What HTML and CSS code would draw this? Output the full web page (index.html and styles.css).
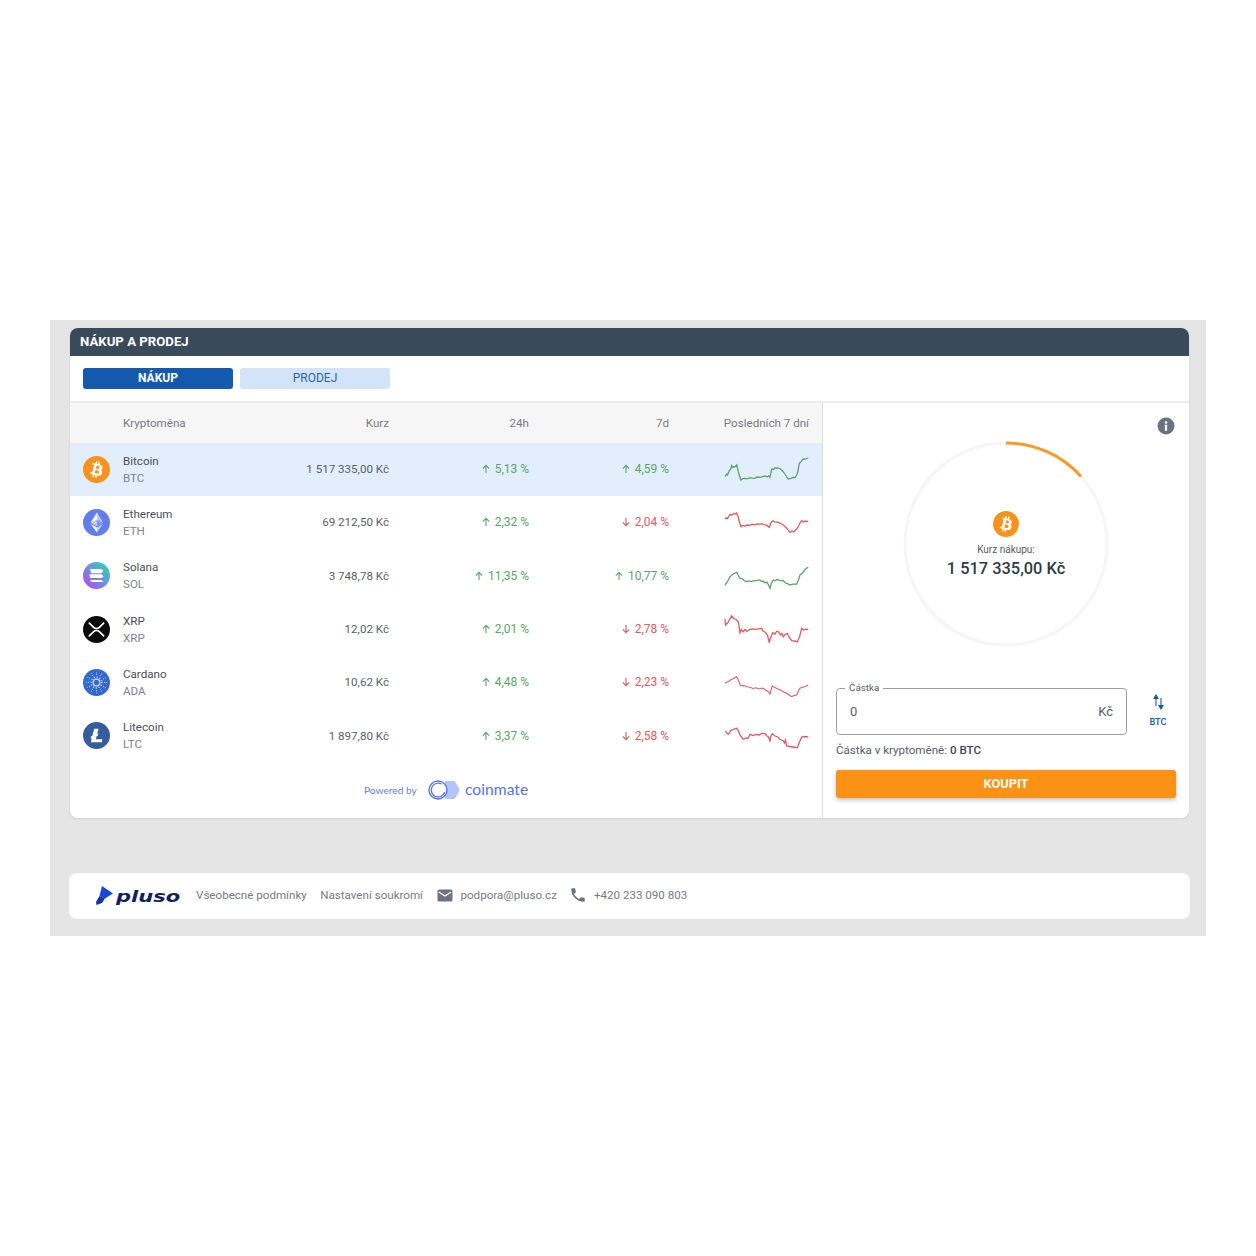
FILE: index.html
```html
<!DOCTYPE html>
<html lang="cs">
<head>
  <meta charset="UTF-8">
  <meta name="viewport" content="width=device-width, initial-scale=1.0">
  <title>Pluso - Nákup a prodej</title>
  <link rel="stylesheet" href="styles.css">
</head>
<body>
  <svg class="defs" width="0" height="0" aria-hidden="true">
    <defs>
      <symbol id="arrow-up" viewBox="0 0 10 10"><path d="M5 9V1.5M1.8 4.6 5 1.4l3.2 3.2" fill="none" stroke="currentColor" stroke-width="1.1"/></symbol>
      <symbol id="arrow-down" viewBox="0 0 10 10"><path d="M5 1v7.5M1.8 5.4 5 8.6l3.2-3.2" fill="none" stroke="currentColor" stroke-width="1.1"/></symbol>
      <symbol id="btc" viewBox="0 0 32 32">
        <circle cx="16" cy="16" r="16" fill="#f7931a"/>
        <path fill="#fff" d="M23.189 14.02c.314-2.096-1.283-3.223-3.465-3.975l.708-2.84-1.728-.43-.69 2.765c-.454-.114-.92-.22-1.385-.326l.695-2.783L15.596 6l-.708 2.839c-.376-.086-.746-.17-1.104-.26l.002-.009-2.384-.595-.46 1.846s1.283.294 1.256.312c.7.175.826.638.805 1.006l-.806 3.235c.048.012.11.03.18.057l-.183-.045-1.13 4.532c-.086.212-.303.531-.793.41.018.025-1.256-.313-1.256-.313l-.858 1.978 2.25.561c.418.105.828.215 1.231.318l-.715 2.872 1.727.43.708-2.84c.472.127.93.245 1.378.357l-.706 2.828 1.728.43.715-2.866c2.948.558 5.164.333 6.097-2.333.752-2.146-.037-3.385-1.588-4.192 1.13-.26 1.98-1.003 2.207-2.538zm-3.95 5.538c-.533 2.147-4.148.986-5.32.695l.95-3.805c1.172.293 4.929.872 4.37 3.11zm.535-5.569c-.487 1.953-3.495.96-4.47.717l.86-3.45c.975.243 4.118.696 3.61 2.733z"/>
      </symbol>
      <linearGradient id="sol-grad" x1="0" y1="1" x2="1" y2="0">
        <stop offset="0" stop-color="#c03dea"/>
        <stop offset="0.5" stop-color="#6f8fe0"/>
        <stop offset="1" stop-color="#1fe6a0"/>
      </linearGradient>
    </defs>
  </svg>

  <div class="band">
    <div class="card">
      <h1 class="card-title">NÁKUP A PRODEJ</h1>
      <div class="tabs">
        <button class="tab tab-active">NÁKUP</button>
        <button class="tab">PRODEJ</button>
      </div>

      <div class="card-body">
        <!-- Tabulka kurzů -->
        <div class="rates">
          <div class="row row-head">
            <span></span>
            <span>Kryptoměna</span>
            <span class="num">Kurz</span>
            <span class="num">24h</span>
            <span class="num">7d</span>
            <span class="num">Posledních 7 dní</span>
          </div>

          <div class="row row-selected">
            <svg class="coin"><use href="#btc"/></svg>
            <div class="coin-name">Bitcoin<small>BTC</small></div>
            <span class="num">1 517 335,00 Kč</span>
            <span class="num pct up"><svg class="arrow"><use href="#arrow-up"/></svg>5,13 %</span>
            <span class="num pct up"><svg class="arrow"><use href="#arrow-up"/></svg>4,59 %</span>
            <svg class="spark up" viewBox="0 0 85 30"><polyline points="1,22.7 2.7,20 3.5,21 5.3,16.7 6.5,15.5 7.7,11.7 8.5,13.5 9.3,12.7 11,13 12.7,11 14.3,17.7 15.5,22 17,26 19,24.6 21,24.4 23.5,24.8 26,23.7 28.5,24.2 31,24.3 33,23 36,23.4 38.5,22.6 41,22 43,22.9 44.5,21.8 46,23.3 47.7,15 49.5,15.6 51,14 54.3,14 56.5,15 59.3,17.7 61.5,21 64.3,25 67,24.4 69.3,23.3 71,23.6 72.7,21 74,17 75.3,9.3 76.8,8 78.7,5.3 81,5 84.3,4"/></svg>
          </div>

          <div class="row">
            <svg class="coin" viewBox="0 0 32 32">
              <circle cx="16" cy="16" r="16" fill="#627eea"/>
              <g fill="#fff"><path fill-opacity=".6" d="M16.498 4v8.87l7.497 3.35z"/><path d="M16.498 4L9 16.22l7.498-3.35z"/><path fill-opacity=".6" d="M16.498 21.968v6.027L24 17.616z"/><path d="M16.498 27.995v-6.028L9 17.616z"/><path fill-opacity=".2" d="M16.498 20.573l7.497-4.353-7.497-3.348z"/><path fill-opacity=".6" d="M9 16.22l7.498 4.353v-7.701z"/></g>
            </svg>
            <div class="coin-name">Ethereum<small>ETH</small></div>
            <span class="num">69 212,50 Kč</span>
            <span class="num pct up"><svg class="arrow"><use href="#arrow-up"/></svg>2,32 %</span>
            <span class="num pct down"><svg class="arrow"><use href="#arrow-down"/></svg>2,04 %</span>
            <svg class="spark down" viewBox="0 0 85 30"><polyline points="1,12 2.5,10.8 3.5,11.5 6,7.5 8,8 9.5,6.5 11,7 12.7,6 14.3,10.3 15.5,15 17,19.7 19,18.5 21,19.2 23,18 26,18.3 28,17.2 31,17.8 33,17 36,17.2 38,16.6 41,18 43,18.4 45.3,20.3 46.8,16 48.7,13.7 51,14.8 54.3,15.3 57,16.5 59.3,18 62,20.5 64,22.8 66,25.3 68,23.8 70,25 72.7,22 74.5,19 76,16 77.7,13.7 79.5,15 81,14 84.3,14.7"/></svg>
          </div>

          <div class="row">
            <svg class="coin" viewBox="0 0 32 32">
              <circle cx="16" cy="16" r="16" fill="url(#sol-grad)"/>
              <path fill="#fff" d="M8.500 21.200h12.800c.4 0 .7.100 1 .4l1.900 2.200H10.800c-.4 0-.7-.1-1-.4zM8.500 8.200h12.600c.4 0 .7.100 1 .4l2 2.200-2 2.200c-.3.300-.6.400-1 .4H9.500zM7.500 14.600h14.300l2.700 2.300-2.300 2.200H9.500c-.4 0-.7-.1-1-.4z"/>
            </svg>
            <div class="coin-name">Solana<small>SOL</small></div>
            <span class="num">3 748,78 Kč</span>
            <span class="num pct up"><svg class="arrow"><use href="#arrow-up"/></svg>11,35 %</span>
            <span class="num pct up"><svg class="arrow"><use href="#arrow-up"/></svg>10,77 %</span>
            <svg class="spark up" viewBox="0 0 85 30"><polyline points="1,24 2.5,22 4,19.5 6,15.7 8,14 10,12.5 12.7,11.3 14,14 16,17.3 18,17.5 20,19.5 22.7,20.7 25,20 27,20.6 30,19.6 32.7,19.7 35,19 37.5,20.4 39,20 41,21.7 43,21.3 44.5,24 46,27.3 47.5,22 49.3,19 51,19.8 53,18.4 56,19.6 59.3,19.7 61.5,22 63.5,22.6 66,24 69,23.2 72.7,23 74.5,19 76,14 78,12.5 80,10 82,7.5 84.3,6.3"/></svg>
          </div>

          <div class="row">
            <svg class="coin" viewBox="0 0 32 32">
              <circle cx="16" cy="16" r="16" fill="#0b0b0b"/>
              <path d="M7.500 8.500 12.600 13.400c1.900 1.900 4.900 1.900 6.800 0L24.500 8.500M7.500 23.500 12.600 18.600c1.900-1.900 4.900-1.900 6.800 0L24.500 23.500" fill="none" stroke="#fff" stroke-width="2" stroke-linecap="round"/>
            </svg>
            <div class="coin-name">XRP<small>XRP</small></div>
            <span class="num">12,02 Kč</span>
            <span class="num pct up"><svg class="arrow"><use href="#arrow-up"/></svg>2,01 %</span>
            <span class="num pct down"><svg class="arrow"><use href="#arrow-down"/></svg>2,78 %</span>
            <svg class="spark down" viewBox="0 0 85 30"><polyline points="1,5 1.500,11 4,8.500 5.500,5.500 7.700,2 9.500,4.500 12,5.500 14.300,7.700 15.200,13 16,18.700 17.500,15.500 19,17.800 21,15.500 23,17.500 26,15.300 29,14.800 32,15.400 35,14.800 37.700,14.300 39,17 41.500,18.500 43.500,21 45.300,28.700 46.500,24 48.700,18.700 51,20 52.500,17.500 54.300,17.700 56.500,21 58,19.500 59.300,22.700 61,20.500 63.300,19.300 65,23 67.700,26.700 70,27 73.300,27.700 75.500,23 77.700,14.300 79.500,16 81.500,15.200 84.300,15.300"/></svg>
          </div>

          <div class="row">
            <svg class="coin" viewBox="0 0 32 32">
              <circle cx="16" cy="16" r="16" fill="#3468d1"/>
              <circle cx="16" cy="16" r="4" fill="none" stroke="#fff" stroke-width="1.400" stroke-opacity=".8"/>
              <g fill="none" stroke="#fff" stroke-linecap="round">
                <circle cx="16" cy="16" r="6.500" stroke-width="1.500" stroke-dasharray="0 3.403"/>
                <circle cx="16" cy="16" r="9.500" stroke-width="1.100" stroke-dasharray="0 4.974"/>
                <circle cx="16" cy="16" r="12" stroke-width="0.800" stroke-dasharray="0 6.283"/>
              </g>
            </svg>
            <div class="coin-name">Cardano<small>ADA</small></div>
            <span class="num">10,62 Kč</span>
            <span class="num pct up"><svg class="arrow"><use href="#arrow-up"/></svg>4,48 %</span>
            <span class="num pct down"><svg class="arrow"><use href="#arrow-down"/></svg>2,23 %</span>
            <svg class="spark down thin" viewBox="0 0 85 30"><polyline points="1,16.300 3,15 5,14.500 7,12.500 9,12 11,10.500 12.700,9.700 14.500,13.500 16.300,18.300 19,18.600 22,19 24,20 26,20.300 29,21.500 32,20.800 35,22 37,21.200 39.300,21.300 42,23.200 44,24.500 46,27 47,23 48.300,19 51,20.500 54,22 56.500,23 59.300,24.700 62,26 64.500,27.500 67.700,29.700 70,28.500 72.700,28 74.500,24 76,21.300 79,20 81.500,19.500 84.300,18"/></svg>
          </div>

          <div class="row">
            <svg class="coin" viewBox="0 0 32 32">
              <circle cx="16" cy="16" r="16" fill="#345d9d"/>
              <path fill="#fff" d="M10.427 19.214L9 19.768l.688-2.759 1.444-.58L13.213 8h5.129l-1.519 6.196 1.41-.571-.68 2.75-1.427.571-.848 3.483H23L22.127 24H9.252z"/>
            </svg>
            <div class="coin-name">Litecoin<small>LTC</small></div>
            <span class="num">1 897,80 Kč</span>
            <span class="num pct up"><svg class="arrow"><use href="#arrow-up"/></svg>3,37 %</span>
            <span class="num pct down"><svg class="arrow"><use href="#arrow-down"/></svg>2,58 %</span>
            <svg class="spark down" viewBox="0 0 85 30"><polyline points="1,10 4.300,13.300 6.500,10 9,8.500 12.700,7.300 14.500,10 16.500,15 19.300,18.300 22,17 24,17.500 26,13.300 29,14.500 32,13.500 35,14 38,12.500 41,12.700 43,15 44.500,16 46,20 47,15 48.300,12.700 51,15 54,16 56,18.500 59.300,20 60.500,22 61.500,19 62.700,25 66,25.500 69,26 73.300,26.700 75.500,21 77.700,16 80,15.500 84.300,16"/></svg>
          </div>

          <div class="powered">
            <span class="powered-by">Powered by</span>
            <svg class="cm-logo" width="32" height="20" viewBox="0 0 32 20">
              <path d="M17 1h8.500c.8 0 1.500.4 1.900 1.100l3.800 6.700c.4.700.4 1.700 0 2.400l-3.800 6.700c-.4.700-1.100 1.100-1.900 1.100H17z" fill="#b3c3fb"/>
              <circle cx="10" cy="10" r="9" fill="#fff" stroke="#5b72e6" stroke-width="1.400"/>
              <path d="M13.500 4a6.900 6.900 0 1 0 3.300 8" fill="none" stroke="#5b72e6" stroke-width="1.300"/>
            </svg>
            <span class="cm-name">coinmate</span>
          </div>
        </div>

        <!-- Nákupní formulář -->
        <div class="order">
          <svg class="info" viewBox="0 0 18 18">
            <circle cx="9" cy="9" r="8.500" fill="#6b7280"/>
            <circle cx="9" cy="5.400" r="1.250" fill="#fff"/>
            <rect x="7.900" y="7.800" width="2.200" height="6" rx="0.400" fill="#fff"/>
          </svg>

          <div class="ring">
            <svg class="ring-svg" viewBox="0 0 206 206">
              <circle cx="103" cy="103" r="101" fill="none" stroke="#f6f6f6" stroke-width="3"/>
              <path d="M103 2A101 101 0 0 1 178 35.400" fill="none" stroke="#f89a26" stroke-width="3"/>
            </svg>
            <div class="ring-text">
              <svg class="ring-coin"><use href="#btc"/></svg>
              <span class="ring-label">Kurz nákupu:</span>
              <strong class="ring-price">1 517 335,00 Kč</strong>
            </div>
          </div>

          <div class="amount-line">
            <fieldset class="amount">
              <legend>Částka</legend>
              <div class="amount-inner"><span>0</span><span>Kč</span></div>
            </fieldset>
            <button class="swap">
              <svg width="11" height="16" viewBox="0 0 11 16">
                <path d="M3 12V3M1 4.400 3 1l2 3.400z" fill="#1359ad" stroke="#1359ad" stroke-width="1.100"/>
                <path d="M8 4v9M6 11.600 8 15l2-3.400z" fill="#1359ad" stroke="#1359ad" stroke-width="1.100"/>
              </svg>
              BTC
            </button>
          </div>

          <p class="crypto-amount">Částka v kryptoměně: <b>0 BTC</b></p>
          <button class="buy">KOUPIT</button>
        </div>
      </div>
    </div>

    <div class="footer">
      <div class="brand">
        <svg width="19" height="21" viewBox="0 0 19 21">
          <path d="M7 1 18 8.500 10 13.500 4.500 11z" fill="#1a45d8"/>
          <path d="M4.500 11 10 13.500 7 18 1.500 20 1 17z" fill="#12389e"/>
        </svg>
        <span class="brand-name">pluso</span>
      </div>
      <a class="foot-link">Všeobecné podmínky</a>
      <a class="foot-link">Nastavení soukromí</a>
      <svg class="foot-icon" width="16" height="13" viewBox="0 0 16 13">
        <rect x="0.500" y="0.500" width="15" height="12" rx="1.500" fill="#6b7280"/>
        <path d="M1.800 3 8 7l6.200-4" fill="none" stroke="#fff" stroke-width="1.300"/>
      </svg>
      <a class="foot-contact">podpora@pluso.cz</a>
      <svg class="foot-icon foot-phone" width="18" height="18" viewBox="0 0 24 24">
        <path fill="#6b7280" d="M6.620 10.790c1.440 2.830 3.760 5.140 6.590 6.590l2.200-2.200c.27-.27.670-.36 1.020-.24 1.120.370 2.330.570 3.570.570.550 0 1 .45 1 1V20c0 .55-.45 1-1 1-9.390 0-17-7.610-17-17 0-.55.450-1 1-1h3.500c.55 0 1 .45 1 1 0 1.250.2 2.450.57 3.570.11.350.03.740-.25 1.020z"/>
      </svg>
      <a class="foot-contact">+420 233 090 803</a>
    </div>
  </div>
</body>
</html>
```

FILE: styles.css
```css
* {
  margin: 0;
  padding: 0;
  box-sizing: border-box;
  font-family: Roboto, "Liberation Sans", sans-serif;
}

body {
  background-color: #fff;
  color: #5f6670;
  font-size: 11.6px;
}

.defs {
  display: block;
  height: 0;
}

.band {
  margin: 320px 50px 0;
  padding: 8px 16px 17px 19px;
  background: #e5e5e5;
}

.card {
  margin: 0 1px 55px;
  background: #fff;
  border-radius: 8px;
  overflow: hidden;
  box-shadow: 0 1px 3px rgba(0, 0, 0, 0.08);
}

.card-title {
  height: 27.5px;
  padding-left: 10px;
  background: #3a4a5a;
  color: #fff;
  font-size: 13.2px;
  font-weight: 700;
  line-height: 27.5px;
}

.tabs {
  display: flex;
  gap: 7px;
  height: 47px;
  padding: 12px 13px 0;
  border-bottom: 2px solid #ececec;
}

.tab {
  width: 150px;
  height: 21px;
  border: none;
  border-radius: 3px;
  background: #d3e4f8;
  color: #2a64a8;
  font-size: 12px;
  font-weight: 400;
}

.tab-active {
  background: #1359ad;
  color: #fff;
  font-weight: 700;
}

.card-body {
  display: flex;
}

.rates {
  flex: 0 0 753px;
  border-right: 1px solid #ddd;
}

.row {
  display: grid;
  grid-template-columns: 40px 120px 146px 140px 140px 140px;
  align-items: center;
  height: 53.33px;
  padding: 0 13px;
  color: #5a6068;
}

.row-head {
  height: 40px;
  background: #f6f6f6;
  color: #767b82;
}

.row-selected {
  background: #e3eefc;
}

.num {
  text-align: right;
}

.pct {
  font-size: 12px;
}

.up {
  color: #5aa46a;
}

.down {
  color: #e2585f;
}

.arrow {
  width: 10px;
  height: 10px;
  margin-right: 4px;
  vertical-align: -1px;
}

.coin {
  display: block;
  width: 27px;
  height: 27px;
}

.coin-name {
  padding-top: 1px;
  line-height: 17px;
  color: #4a5058;
}

.coin-name small {
  display: block;
  font-size: 11.6px;
  color: #80858c;
}

.spark {
  justify-self: end;
  width: 85px;
  height: 30px;
}

.spark polyline {
  fill: none;
  stroke: currentColor;
  stroke-width: 1.3;
}

.spark.thin polyline {
  stroke-width: 1.1;
}

.powered {
  display: flex;
  align-items: center;
  height: 56px;
  padding-left: 294px;
}

.powered-by {
  width: 63px;
  font-family: Lato, sans-serif;
  font-size: 10.2px;
  color: #6b80e8;
}

.cm-logo {
  margin-left: 1px;
}

.cm-name {
  margin: 0 0 2px 5px;
  font-family: Lato, sans-serif;
  font-size: 15.7px;
  color: #5b72e6;
}

.order {
  position: relative;
  flex: 0 0 366px;
  padding: 38.5px 13px 0;
}

.info {
  position: absolute;
  top: 14.5px;
  right: 14px;
  width: 18px;
  height: 18px;
}

.ring {
  display: grid;
  place-items: center;
  width: 206px;
  height: 206px;
  margin: 0 auto;
}

.ring-svg, .ring-text {
  grid-area: 1 / 1;
}

.ring-svg {
  width: 206px;
  height: 206px;
}

.ring-text {
  display: flex;
  flex-direction: column;
  align-items: center;
}

.ring-coin {
  width: 26px;
  height: 26px;
}

.ring-label {
  margin-top: 7px;
  font-size: 10px;
  color: #555b63;
}

.ring-price {
  margin-top: 4px;
  font-size: 16.4px;
  font-weight: 500;
  color: #2f3a48;
}

.amount-line {
  display: flex;
  margin: 34px -13px 0 0;
}

.amount {
  width: 291px;
  height: 54px;
  padding: 0 13px;
  border: 1px solid #9e9e9e;
  border-radius: 4px;
}

.amount legend {
  margin-left: -5px;
  padding: 0 4px;
  font-size: 9.8px;
  line-height: 14px;
  color: #5a6068;
}

.amount-inner {
  display: flex;
  justify-content: space-between;
  padding-top: 9px;
  font-size: 13px;
  color: #555b63;
}

.swap {
  display: flex;
  flex-direction: column;
  align-items: center;
  gap: 6px;
  width: 62px;
  padding-top: 13px;
  border: none;
  background: none;
  color: #1359ad;
  font-size: 9.2px;
  font-weight: 500;
}

.crypto-amount {
  margin-top: 7px;
  line-height: 16px;
  color: #555b63;
}

.crypto-amount b {
  font-weight: 500;
  color: #3f4650;
}

.buy {
  display: block;
  width: 340px;
  height: 28px;
  margin-top: 12px;
  padding-bottom: 1px;
  border: none;
  border-radius: 3px;
  background: #fb9216;
  box-shadow: 0 2px 4px rgba(0, 0, 0, 0.25);
  color: #fff;
  font-size: 12.8px;
  font-weight: 700;
}

.footer {
  display: flex;
  align-items: center;
  height: 46px;
  padding: 0 0 2px 26px;
  background: #fff;
  border-radius: 8px;
  color: #767b82;
}

.brand {
  display: flex;
  align-items: center;
  width: 101px;
}

.brand-name {
  margin: 3px 0 0 2px;
  font-family: "DejaVu Sans", sans-serif;
  font-size: 15px;
  font-weight: 700;
  font-style: italic;
  color: #12205e;
  transform: scaleX(1.4);
  transform-origin: left center;
}

.foot-link {
  margin-right: 13.5px;
}

.foot-icon {
  margin-right: 8px;
}

.foot-phone {
  margin: 0 7px 0 -2px;
}

.foot-contact {
  margin-right: 14px;
}
```
